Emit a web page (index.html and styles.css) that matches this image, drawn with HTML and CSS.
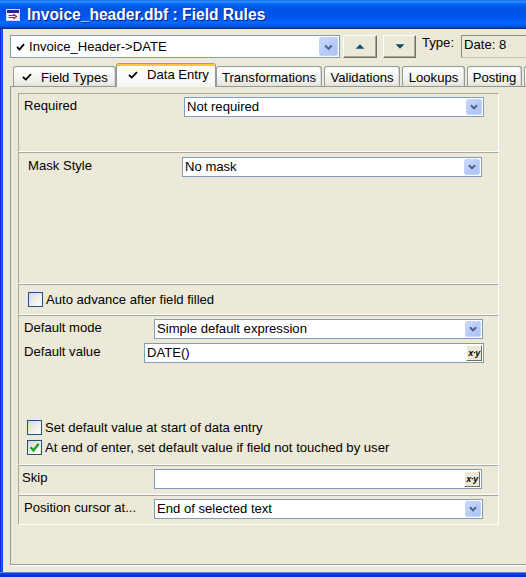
FILE: index.html
```html
<!DOCTYPE html>
<html>
<head>
<meta charset="utf-8">
<title>Field Rules</title>
<link rel="stylesheet" href="styles.css">
</head>
<body>
<div class="window">
  <div class="titlebar">
    <svg class="app-icon" width="14" height="12" viewBox="0 0 14 12">
      <rect x="0.5" y="0.5" width="13" height="11" fill="#f4f4ff" stroke="#d8d8f0"/>
      <rect x="1" y="1" width="12" height="3" fill="#27278a"/>
      <path d="M2.5 6.5h6M2.5 8.5h6" stroke="#c8104a" stroke-width="1"/>
      <path d="M7.5 5l3 2.5-3 2.5" fill="none" stroke="#c8104a" stroke-width="1.2"/>
    </svg>
    <span class="title">Invoice_header.dbf : Field Rules</span>
  </div>
  <div class="frame">
    <div class="edge-left"></div>
    <div class="client">
      <div class="toolbar">
        <div class="combo combo-field">
          <span class="combo-text">
            <svg class="tick" width="9" height="8" viewBox="0 0 9 8"><path d="M1 4l2.5 2.5L8 1.2" fill="none" stroke="#000" stroke-width="1.8"/></svg>Invoice_Header-&gt;DATE
          </span>
          <span class="drop drop-big">
            <svg width="18" height="18" viewBox="0 0 18 18"><polyline points="5.5,7.5 9,11 12.5,7.5" fill="none" stroke="#4d6185" stroke-width="2.2"/></svg>
          </span>
        </div>
        <button class="btn nav nav-up" type="button">
          <svg width="10" height="5" viewBox="0 0 10 5"><path d="M0.5 4.8L5 0.2 9.5 4.8Z" fill="#0c4f70"/></svg>
        </button>
        <button class="btn nav nav-down" type="button">
          <svg width="10" height="5" viewBox="0 0 10 5"><path d="M0.5 0.2L5 4.8 9.5 0.2Z" fill="#0c4f70"/></svg>
        </button>
        <span class="type-label">Type:</span>
        <div class="type-box">Date: 8</div>
      </div>

      <div class="tabs">
        <div class="tab tab-types">
          <svg class="tab-tick" width="10" height="8" viewBox="0 0 10 8"><path d="M1 4l2.8 2.6L9 1.2" fill="none" stroke="#000" stroke-width="1.8"/></svg>Field Types
        </div>
        <div class="tab tab-entry active">
          <svg class="tab-tick" width="10" height="8" viewBox="0 0 10 8"><path d="M1 4l2.8 2.6L9 1.2" fill="none" stroke="#000" stroke-width="1.8"/></svg>Data Entry
        </div>
        <div class="tab tab-trans">Transformations</div>
        <div class="tab tab-valid">Validations</div>
        <div class="tab tab-look">Lookups</div>
        <div class="tab tab-post">Posting</div>
        <div class="tab tab-more"></div>
      </div>

      <div class="page">
        <div class="groups">
          <div class="grp grp-required">
            <div class="row">
              <span class="lbl lbl-required">Required</span>
              <div class="combo w-300">
                <span class="combo-text">Not required</span>
                <span class="drop"><svg width="16" height="16" viewBox="0 0 16 16"><polyline points="4.5,6 8,9.5 11.5,6" fill="none" stroke="#4d6185" stroke-width="2.2"/></svg></span>
              </div>
            </div>
          </div>

          <div class="grp grp-mask">
            <div class="row">
              <span class="lbl lbl-mask">Mask Style</span>
              <div class="combo w-300">
                <span class="combo-text">No mask</span>
                <span class="drop"><svg width="16" height="16" viewBox="0 0 16 16"><polyline points="4.5,6 8,9.5 11.5,6" fill="none" stroke="#4d6185" stroke-width="2.2"/></svg></span>
              </div>
            </div>
          </div>

          <div class="grp grp-auto">
            <label class="check">
              <span class="cb"></span>
              <span>Auto advance after field filled</span>
            </label>
          </div>

          <div class="grp grp-default">
            <div class="row">
              <span class="lbl lbl-mode">Default mode</span>
              <div class="combo w-329">
                <span class="combo-text">Simple default expression</span>
                <span class="drop"><svg width="16" height="16" viewBox="0 0 16 16"><polyline points="4.5,6 8,9.5 11.5,6" fill="none" stroke="#4d6185" stroke-width="2.2"/></svg></span>
              </div>
            </div>
            <div class="row row-gap">
              <span class="lbl lbl-value">Default value</span>
              <div class="field w-340">
                <span class="combo-text">DATE()</span>
                <span class="xy">x·y</span>
              </div>
            </div>
            <div class="checks">
              <label class="check">
                <span class="cb"></span>
                <span>Set default value at start of data entry</span>
              </label>
              <label class="check">
                <span class="cb checked"><svg width="13" height="13" viewBox="0 0 13 13"><path d="M2.5 6.2l3 3.2 5.2-6.6" fill="none" stroke="#21a121" stroke-width="2.4"/></svg></span>
                <span>At end of enter, set default value if field not touched by user</span>
              </label>
            </div>
          </div>

          <div class="grp grp-skip">
            <div class="row">
              <span class="lbl lbl-skip">Skip</span>
              <div class="field w-328">
                <span class="combo-text"></span>
                <span class="xy">x·y</span>
              </div>
            </div>
          </div>

          <div class="grp grp-cursor">
            <div class="row">
              <span class="lbl lbl-cursor">Position cursor at...</span>
              <div class="combo w-329">
                <span class="combo-text">End of selected text</span>
                <span class="drop"><svg width="16" height="16" viewBox="0 0 16 16"><polyline points="4.5,6 8,9.5 11.5,6" fill="none" stroke="#4d6185" stroke-width="2.2"/></svg></span>
              </div>
            </div>
          </div>
        </div>
      </div>
    </div>
  </div>
  <div class="edge-bottom"></div>
</div>
</body>
</html>
```

FILE: styles.css
```css
* {
  box-sizing: border-box;
}

html,
body {
  margin: 0;
  padding: 0;
}

body {
  width: 526px;
  height: 577px;
  overflow: hidden;
  background: #ece9d8;
  font-family: "Liberation Sans", Arial, sans-serif;
  font-size: 13.1px;
  color: #000;
}

.window {
  width: 526px;
  height: 577px;
  display: flex;
  flex-direction: column;
  overflow: hidden;
}

/* ---- caption ---- */
.titlebar {
  height: 29px;
  flex: none;
  display: flex;
  align-items: center;
  padding-left: 6px;
  background: linear-gradient(to bottom,
    #0058ee 0%, #3a93ff 4%, #288eff 7%, #127dff 10%, #036ffc 13%,
    #0262ee 17%, #0057e5 24%, #0054e3 30%, #0055eb 56%, #005bf5 66%,
    #026afe 76%, #0062ef 86%, #0052d6 92%, #0040ab 96%, #003092 100%);
}

.app-icon {
  flex: none;
  margin-right: 7px;
  margin-top: 1px;
}

.title {
  color: #fff;
  font-weight: bold;
  font-size: 15.6px;
  white-space: nowrap;
  text-shadow: 1px 1px 0 #0a1a7e;
}

/* ---- window frame ---- */
.frame {
  flex: 1;
  display: flex;
  min-height: 0;
}

.edge-left {
  width: 3px;
  flex: none;
  background: linear-gradient(to right, #0831d9 0 1px, #1c5ae8 1px 2px, #0a48d8 2px 3px);
}

.edge-bottom {
  height: 5px;
  flex: none;
  background: linear-gradient(to bottom, #5c84e8 0 1px, #0a3dd8 1px 3px, #0831d9 3px 5px);
}

.client {
  flex: 1;
  min-width: 0;
  display: flex;
  flex-direction: column;
  padding: 6px 0 7px 7px;
  background: #ece9d8;
}

/* ---- top toolbar ---- */
.toolbar {
  height: 23px;
  flex: none;
  display: flex;
  align-items: flex-start;
}

.combo,
.field {
  display: flex;
  height: 20px;
  background: #fff;
  border: 1px solid #7f9db9;
  flex: none;
}

.combo-text {
  flex: 1;
  min-width: 0;
  display: flex;
  align-items: flex-start;
  padding-left: 2px;
  line-height: 18px;
  white-space: nowrap;
  overflow: hidden;
}

.combo-field {
  width: 330px;
  height: 23px;
}

.combo-field .combo-text {
  padding-left: 5px;
  line-height: 20px;
  align-items: center;
}

.tick {
  margin-right: 4px;
  flex: none;
}

.drop {
  width: 16px;
  margin: 1px;
  flex: none;
  display: flex;
  align-items: center;
  justify-content: center;
  border: 1px solid #c3d3fd;
  border-radius: 2px;
  background: linear-gradient(135deg, #c9daff 0%, #b7cbf8 55%, #adc3f6 100%);
}

.drop-big {
  width: 19px;
}

.btn {
  flex: none;
  height: 23px;
  padding: 0;
  margin: 0;
  display: flex;
  align-items: center;
  justify-content: center;
  background: #ece9d8;
  border: 1px solid;
  border-color: #fff #716f64 #716f64 #fff;
  box-shadow: inset -1px -1px 0 #aca899;
}

.nav-up {
  width: 34px;
  margin-left: 3px;
}

.nav-down {
  width: 33px;
  margin-left: 6px;
}

.type-label {
  width: 39px;
  margin-left: 6px;
  line-height: 16px;
  flex: none;
}

.type-box {
  flex: none;
  width: 90px;
  height: 23px;
  padding-left: 2px;
  line-height: 18px;
  border: 1px solid;
  border-color: #8c8c86 #c5c2b2 #c5c2b2 #8c8c86;
  background: #ece9d8;
}

/* ---- tabs ---- */
.tabs {
  height: 23px;
  flex: none;
  display: flex;
  align-items: flex-end;
  margin-top: 5px;
  padding-left: 3px;
  position: relative;
  z-index: 1;
}

.tab {
  height: 20px;
  flex: none;
  display: flex;
  align-items: center;
  justify-content: center;
  white-space: nowrap;
  border: 1px solid #919b9c;
  border-bottom: none;
  border-radius: 3px 3px 0 0;
  background: linear-gradient(to bottom, #fefefe 0%, #f7f7f4 45%, #eceae3 85%, #e2e0d7 100%);
  box-shadow: inset -1px 0 0 #dcdad0;
  padding-top: 1px;
}

.tab.active {
  height: 24px;
  margin-bottom: -1px;
  border-top: 1px solid #e68b2c;
  background: linear-gradient(to bottom, #fcfcfe 0%, #fbfbf9 60%, #f4f3ee 100%);
  box-shadow: inset 0 2px 0 #ffc83c;
  padding-top: 0;
  padding-bottom: 2px;
}

.tab-tick {
  flex: none;
  margin-right: 9px;
}

.tab-types {
  width: 103px;
  justify-content: flex-start;
  padding-left: 8px;
}

.tab-entry {
  width: 100px;
  justify-content: flex-start;
  padding-left: 11px;
}

.tab-trans {
  width: 106px;
}

.tab-valid {
  width: 76px;
  margin-left: 2px;
}

.tab-look {
  width: 63px;
  margin-left: 2px;
}

.tab-post {
  width: 55px;
  margin-left: 2px;
}

.tab-more {
  width: 30px;
  margin-left: 2px;
}

/* ---- tab page ---- */
.page {
  flex: 1;
  margin-right: -30px;
  border: 1px solid #919b9c;
  padding: 6px 0 0 7px;
  background: #ece9d8;
  box-shadow: 0 1px 0 #fff;
}

.groups {
  width: 481px;
  display: flex;
  flex-direction: column;
}

.grp {
  border: 1px solid;
  border-color: #aca899 #fff #fff #aca899;
}

.grp-required {
  height: 59px;
  padding: 3px 0 0 5px;
}

.grp-mask {
  height: 132px;
  padding: 4px 0 0 9px;
}

.grp-auto {
  height: 31px;
  padding-left: 9px;
  display: flex;
  align-items: center;
}

.grp-default {
  height: 150px;
  padding: 3px 0 0 5px;
}

.grp-skip {
  height: 30px;
  padding: 3px 0 0 3px;
}

.grp-cursor {
  height: 30px;
  padding: 3px 0 0 5px;
}

.row {
  display: flex;
  align-items: flex-start;
}

.row-gap {
  margin-top: 4px;
}

.lbl {
  flex: none;
  line-height: 18px;
  white-space: nowrap;
}

.lbl-required { width: 160px; }
.lbl-mask { width: 154px; }
.lbl-mode { width: 130px; }
.lbl-value { width: 120px; }
.lbl-skip { width: 132px; }
.lbl-cursor { width: 130px; }

.w-300 { width: 300px; }
.w-329 { width: 329px; }
.w-340 { width: 340px; }
.w-328 { width: 328px; }

.xy {
  width: 16px;
  margin: 1px;
  flex: none;
  display: flex;
  align-items: center;
  justify-content: center;
  background: #ece9d8;
  border: 1px solid;
  border-color: #fff #716f64 #716f64 #fff;
  font-size: 9px;
  font-weight: bold;
  font-style: italic;
  letter-spacing: -0.5px;
  line-height: 1;
}

/* ---- check boxes ---- */
.checks {
  margin-top: 54px;
  padding-left: 3px;
  display: flex;
  flex-direction: column;
}

.check {
  height: 20px;
  display: flex;
  align-items: center;
  white-space: nowrap;
}

.cb {
  width: 15px;
  height: 15px;
  flex: none;
  margin-right: 3px;
  border: 1px solid #1c5180;
  background: linear-gradient(135deg, #d6d5cc 0%, #eeede6 50%, #fdfdfb 100%);
  display: flex;
  align-items: center;
  justify-content: center;
}
```
